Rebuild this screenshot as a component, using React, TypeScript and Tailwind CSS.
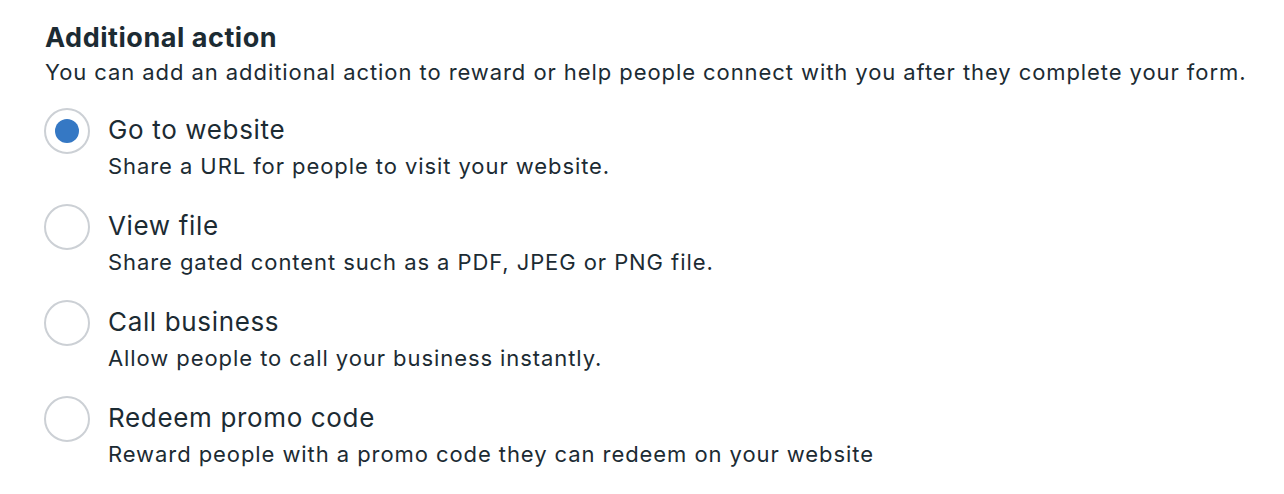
import React, { useState } from "react";

interface Option {
  id: string;
  title: string;
  description: string;
}

const options: Option[] = [
  {
    id: "website",
    title: "Go to website",
    description: "Share a URL for people to visit your website.",
  },
  {
    id: "file",
    title: "View file",
    description: "Share gated content such as a PDF, JPEG or PNG file.",
  },
  {
    id: "call",
    title: "Call business",
    description: "Allow people to call your business instantly.",
  },
  {
    id: "promo",
    title: "Redeem promo code",
    description: "Reward people with a promo code they can redeem on your website",
  },
];

const Radio = ({ checked }: { checked: boolean }) => (
  <div className="w-[46px] h-[46px] rounded-full border-2 border-[#ccd0d5] bg-white flex items-center justify-center flex-shrink-0">
    {checked && <div className="w-6 h-6 rounded-full bg-[#3578c4]" />}
  </div>
);

function App() {
  const [selected, setSelected] = useState("website");

  return (
    <div
      className="min-h-screen bg-white text-[#1c2b33] pl-[45px] pt-[21px]"
      style={{ fontFamily: "Inter, 'Noto Sans', sans-serif" }}
    >
      <h2 className="text-[27px] leading-[34px] font-bold tracking-[0.02em]">Additional action</h2>
      <p className="text-[22px] leading-[28px] mt-[3px] tracking-[0.042em]">
        You can add an additional action to reward or help people connect with you after they complete your form.
      </p>
      <div className="mt-[22px] flex flex-col gap-[22px]">
        {options.map((o) => (
          <div
            key={o.id}
            className="flex items-start gap-[18px] -ml-[1px] cursor-pointer"
            onClick={() => setSelected(o.id)}
          >
            <Radio checked={selected === o.id} />
            <div className="flex flex-col pt-[4px]">
              <span className="text-[26px] leading-[36px] tracking-[0.025em]">{o.title}</span>
              <span className="text-[22px] leading-[32px] mt-[2px] tracking-[0.042em]">{o.description}</span>
            </div>
          </div>
        ))}
      </div>
    </div>
  );
}

export default App;
